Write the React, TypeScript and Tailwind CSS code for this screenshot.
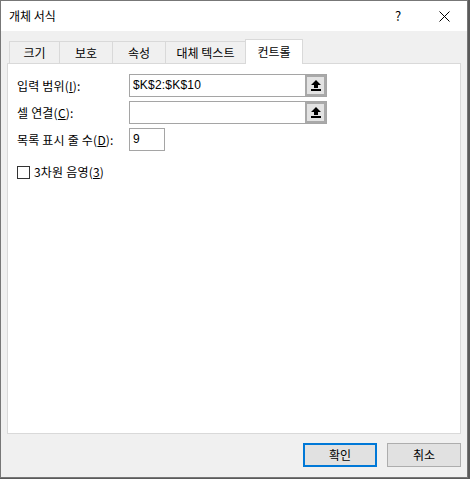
const font = { fontFamily: '"Noto Sans CJK KR", "Noto Sans", sans-serif' };
const latin = { fontFamily: '"Liberation Sans", Arial, sans-serif' };

function PickIcon() {
  return (
    <svg width="10" height="11" viewBox="0 0 10 11">
      <path d="M5 0 L10 5 L7 5 L7 8 L3 8 L3 5 L0 5 Z" fill="#000" />
      <rect x="0" y="9" width="10" height="2" fill="#000" />
    </svg>
  );
}

function RefInput({ value }: { value: string }) {
  return (
    <div className="flex h-[23px] w-[198px] border border-[#a5a5a5] bg-white">
      <div className="flex-1 pl-[3px] text-[12px] leading-[21px] text-black" style={latin}>
        {value}
      </div>
      <div className="flex w-[21px] items-center justify-center border-2 border-[#a9a9a9] bg-[#e3e3e3]">
        <PickIcon />
      </div>
    </div>
  );
}

export default function App() {
  const tabs = [
    { label: "크기", w: "w-[51px]" },
    { label: "보호", w: "w-[54px]" },
    { label: "속성", w: "w-[54px]" },
    { label: "대체 텍스트", w: "w-[81px]" },
  ];

  return (
    <div className="h-[479px] w-[470px] bg-[#5a5a5a]" style={font}>
      <div className="flex h-[478px] w-[468px] flex-col border border-[#777777] bg-[#f0f0f0]">
        {/* title bar */}
        <div className="flex h-[30px] items-center bg-white pl-[8px] text-[12px] text-black">
          <span className="flex-1">개체 서식</span>
          <span className="w-[46px] text-center text-[13px]">?</span>
          <span className="flex w-[46px] items-center justify-center">
            <svg width="11" height="11" viewBox="0 0 11 11">
              <path d="M0.5 0.5 L10.5 10.5 M10.5 0.5 L0.5 10.5" stroke="#000" strokeWidth="1" />
            </svg>
          </span>
        </div>

        {/* tabs */}
        <div className="flex h-[32px] items-end pl-[8px] text-[12px] text-black">
          {tabs.map((t) => (
            <div
              key={t.label}
              className={`${t.w} -mr-px flex h-[22px] items-center justify-center border border-b-0 border-[#d9d9d9] bg-[#f0f0f0]`}
            >
              {t.label}
            </div>
          ))}
          <div className="relative z-10 -mb-px flex h-[25px] w-[58px] items-center justify-center border border-b-0 border-[#d9d9d9] bg-white">
            컨트롤
          </div>
        </div>

        {/* panel */}
        <div className="mx-[6px] flex h-[371px] flex-col border border-[#d9d9d9] bg-white pl-[9px] pt-[10px] text-[12px] text-black tracking-[0.2px]">
          <div className="flex items-center">
            <span className="w-[112px]">
              입력 범위(<span className="underline">I</span>):
            </span>
            <RefInput value="$K$2:$K$10" />
          </div>
          <div className="mt-[4px] flex items-center">
            <span className="w-[112px]">
              셀 연결(<span className="underline">C</span>):
            </span>
            <RefInput value="" />
          </div>
          <div className="mt-[4px] flex items-center">
            <span className="w-[112px]">
              목록 표시 줄 수(<span className="underline">D</span>):
            </span>
            <div
              className="h-[23px] w-[36px] border border-[#a5a5a5] bg-white pl-[3px] text-[12px] leading-[21px]"
              style={latin}
            >
              9
            </div>
          </div>
          <div className="mt-[12px] flex items-center">
            <div className="h-[13px] w-[13px] border border-[#333333] bg-white" />
            <span className="ml-[4px]">
              3차원 음영(<span className="underline">3</span>)
            </span>
          </div>
        </div>

        {/* buttons */}
        <div className="mr-[6px] mt-[9px] flex justify-end gap-[10px] text-[12px] text-black">
          <button className="h-[24px] w-[74px] border-2 border-[#0078d7] bg-[#e1e1e1]">확인</button>
          <button className="h-[24px] w-[74px] border border-[#adadad] bg-[#e1e1e1]">취소</button>
        </div>
      </div>
    </div>
  );
}
